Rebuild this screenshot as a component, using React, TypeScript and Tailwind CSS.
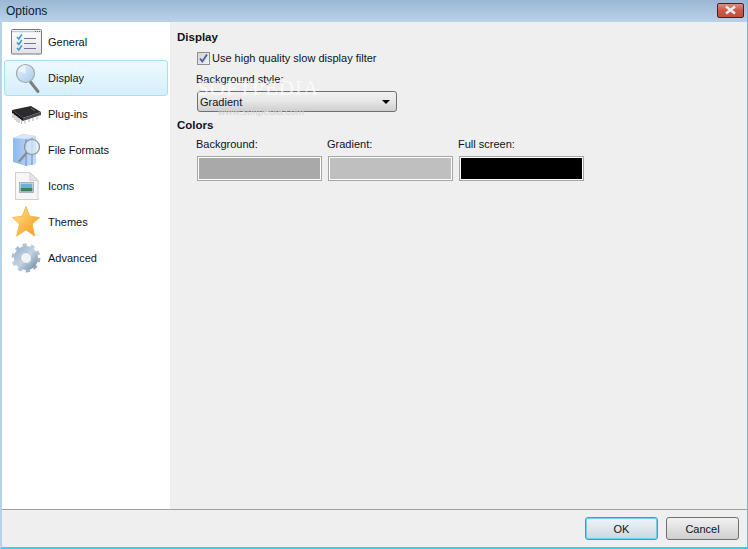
const font = "font-['Liberation_Sans',Arial,sans-serif]";

const GeneralIcon = () => (
  <svg width="32" height="28" viewBox="0 0 32 28">
    <defs>
      <linearGradient id="genBg" x1="0" y1="0" x2="0" y2="1">
        <stop offset="0" stopColor="#ffffff" />
        <stop offset="1" stopColor="#e2e2e6" />
      </linearGradient>
    </defs>
    <rect x="0.500" y="1.500" width="30" height="24.500" rx="1" fill="url(#genBg)" stroke="#77797e" />
    <path d="M1 3.500h29" stroke="#c4c8d2" strokeWidth="1.500" />
    <path d="M24 3.500h1M26 3.500h1M28 3.500h1" stroke="#6d7080" />
    <path d="M6 9l1.800 2 3-4.500M6 14.500l1.800 2 3-4.500M6 20l1.800 2 3-4.500" fill="none" stroke="#2f9bd8" strokeWidth="1.500" />
    <path d="M13 10.500h12M13 15.500h12M13 20.500h12" stroke="#77749a" strokeWidth="1" />
  </svg>
);

const DisplayIcon = () => (
  <svg width="32" height="32" viewBox="0 0 32 32">
    <defs>
      <linearGradient id="lens" x1="0" y1="0" x2="1" y2="1">
        <stop offset="0" stopColor="#e6f1fb" />
        <stop offset="1" stopColor="#a9cbea" />
      </linearGradient>
    </defs>
    <path d="M19.500 20l7.500 9.500" stroke="#7c7e80" strokeWidth="3" strokeLinecap="round" />
    <circle cx="14.500" cy="11.500" r="9" fill="url(#lens)" stroke="#a3a8ac" strokeWidth="1.200" />
    <path d="M14.500 11.500l-7.500-2.500a8 8 0 0 1 7.500-5.500z" fill="#edf5fc" />
  </svg>
);

const PluginIcon = () => (
  <svg width="32" height="24" viewBox="0 0 32 24">
    <path d="M1 8l19-4 10 6-18 6z" fill="#2b2b2d" />
    <path d="M1 8l11 8v3L1 11z" fill="#141416" />
    <path d="M12 16l18-6v3l-18 6z" fill="#4a4a4c" />
    <path d="M2 11v5M4 13v5M6 14.500v5.500M8 16v5M10.500 18v4M14 18.500v3M18 17v3M22 16v3M26 14.500v3" stroke="#b9b9bb" strokeWidth="1.200" />
    <path d="M20 6l4 3" stroke="#707074" />
  </svg>
);

const FormatsIcon = () => (
  <svg width="32" height="34" viewBox="0 0 32 34">
    <defs>
      <linearGradient id="fmtBg" x1="0" y1="0" x2="1" y2="0">
        <stop offset="0" stopColor="#8fb8ee" />
        <stop offset="1" stopColor="#c6dcf6" />
      </linearGradient>
    </defs>
    <path d="M2 5l10-4 13 2v28l-10 2-13-4z" fill="url(#fmtBg)" />
    <path d="M2 5l10-4 13 2-10 3z" fill="#d9e7f9" />
    <path d="M15 6v27M21 5v27" stroke="#5f8fd4" />
    <path d="M15.500 20l-7 8" stroke="#8a8d90" strokeWidth="2.400" strokeLinecap="round" />
    <circle cx="21" cy="14" r="7.500" fill="#dbe8f5" fillOpacity="0.75" stroke="#8d9195" strokeWidth="1.200" />
  </svg>
);

const IconsIcon = () => (
  <svg width="26" height="30" viewBox="0 0 26 30">
    <path d="M1.500 1.500h14.500l8 8v19h-22.500z" fill="#f6f6f6" stroke="#cfcfcf" />
    <path d="M16 1.500v8h8z" fill="#e4e4e4" stroke="#cfcfcf" />
    <rect x="5.500" y="11.500" width="14" height="10" fill="#eef2f4" stroke="#9aa2a8" strokeWidth="0.800" />
    <rect x="6.500" y="12.500" width="12" height="4.500" fill="#6bb0d6" />
    <rect x="6.500" y="17" width="12" height="3.500" fill="#3f7f66" />
  </svg>
);

const ThemesIcon = () => (
  <svg width="32" height="34" viewBox="0 0 32 34">
    <defs>
      <linearGradient id="starBg" x1="0" y1="0" x2="1" y2="1">
        <stop offset="0" stopColor="#ffe88a" />
        <stop offset="1" stopColor="#f4921a" />
      </linearGradient>
    </defs>
    <path d="M24 28l6 3-8 0z" fill="#ececec" />
    <path d="M15 1.500l3.600 9.500 9.900 1.500-7.300 6.500 2.300 12L15 25 5.500 31l3-12L1.500 12.500l9.900-1.500z" fill="url(#starBg)" stroke="#f3b143" strokeWidth="0.800" strokeLinejoin="round" />
  </svg>
);

const AdvancedIcon = () => (
  <svg width="32" height="32" viewBox="0 0 32 32">
    <defs>
      <linearGradient id="gear" x1="0" y1="0" x2="1" y2="1">
        <stop offset="0" stopColor="#9db6cf" />
        <stop offset="0.500" stopColor="#c3d3e2" />
        <stop offset="1" stopColor="#7f98b0" />
      </linearGradient>
    </defs>
    <circle cx="15" cy="16" r="13" fill="none" stroke="url(#gear)" strokeWidth="2.800" strokeDasharray="4.200 4" />
    <circle cx="15" cy="16" r="9" fill="none" stroke="url(#gear)" strokeWidth="6" />
    <circle cx="15" cy="16" r="5.500" fill="#f1f4f7" stroke="#8ea4b8" strokeWidth="0.800" />
  </svg>
);

const items = [
  { label: "General", icon: <GeneralIcon /> },
  { label: "Display", icon: <DisplayIcon />, active: true },
  { label: "Plug-ins", icon: <PluginIcon /> },
  { label: "File Formats", icon: <FormatsIcon /> },
  { label: "Icons", icon: <IconsIcon /> },
  { label: "Themes", icon: <ThemesIcon /> },
  { label: "Advanced", icon: <AdvancedIcon /> },
];

const swatches = [
  { label: "Background:", color: "bg-[#a9a9a9]" },
  { label: "Gradient:", color: "bg-[#bfbfbf]" },
  { label: "Full screen:", color: "bg-black" },
];

export default function App() {
  return (
    <div className={`${font} relative flex h-[549px] w-[748px] flex-col overflow-hidden text-[11px] leading-[14px] text-[#10131c]`}>
      <div className="flex h-[22px] shrink-0 items-center justify-between border-r border-r-[#35d0f2] bg-gradient-to-b from-[#9cb7d3] to-[#b9d2ea] pl-[6px] pr-[3px]">
        <span className="text-[12px] text-[#0d1a2b]">Options</span>
        <div className="flex h-[15px] w-[27px] -translate-y-[1px] items-center justify-center rounded-[2px] border border-[#4a1f2c] bg-gradient-to-b from-[#dc8d7e] via-[#c95a45] to-[#c0523c]">
          <svg width="13" height="10" viewBox="0 0 13 10">
            <path d="M2 1.500l9 7M11 1.500l-9 7" stroke="#e9e9ee" strokeWidth="2.600" />
          </svg>
        </div>
      </div>

      <div className="flex min-h-0 flex-1 border-l-2 border-r border-b-2 border-l-[#b9d2ea] border-r-[#35d0f2] border-b-[#35d0f2] bg-[#efefef]">
        <div className="flex min-h-0 flex-1 flex-col">
          <div className="flex min-h-0 flex-1">
            <nav className="flex w-[168px] shrink-0 flex-col bg-white pl-[2px] pr-[2px] pt-[2px]">
              {items.map((item) => (
                <div
                  key={item.label}
                  className={`flex h-[36px] items-center rounded-[3px] border ${
                    item.active
                      ? "border-[#a9dcf5] bg-gradient-to-b from-[#eef9fe] to-[#d5effc]"
                      : "border-transparent"
                  }`}
                >
                  <div className="flex w-[43px] shrink-0 items-center justify-center">{item.icon}</div>
                  <span className="truncate">{item.label}</span>
                </div>
              ))}
            </nav>

            <main className="flex-1 pl-[7px] pt-[8px]">
              <h2 className="h-[14px] text-[11.5px] font-bold">Display</h2>
              <div className="pl-[20px]">
                <label className="mt-[7px] flex h-[14px] items-center gap-[2px]">
                  <span className="flex h-[13px] w-[13px] items-center justify-center border border-[#8e8f8f] bg-gradient-to-br from-[#d4d4d6] to-[#f0f0f2]">
                    <svg width="11" height="11" viewBox="0 0 11 11">
                      <path d="M2 5.500l2.300 3L9 1.500" fill="none" stroke="#4a5f97" strokeWidth="1.800" />
                    </svg>
                  </span>
                  <span>Use high quality slow display filter</span>
                </label>
                <div className="-ml-[1px] mt-[7px] h-[14px]">Background style:</div>
                <div className="mt-[5px] flex h-[21px] w-[200px] items-center justify-between rounded-[3px] border border-[#707070] bg-gradient-to-b from-[#f2f2f2] via-[#e6e6e6] to-[#cfcfcf] pl-[2px] pr-[6px]">
                  <span>Gradient</span>
                  <span className="h-0 w-0 border-x-[4px] border-t-[4px] border-x-transparent border-t-black" />
                </div>
              </div>
              <h2 className="mt-[6px] h-[14px] text-[11.5px] font-bold">Colors</h2>
              <div className="mt-[5px] flex gap-[6px] pl-[20px]">
                {swatches.map((swatch) => (
                  <div key={swatch.label} className="w-[125px]">
                    <div className="-ml-[1px] h-[14px]">{swatch.label}</div>
                    <div className={`mt-[5px] h-[25px] border-2 border-[#a5a5a5] outline outline-1 -outline-offset-2 outline-white ${swatch.color}`} />
                  </div>
                ))}
              </div>
            </main>
          </div>

          <footer className="flex h-[38px] shrink-0 items-start justify-end gap-[8px] border-t border-[#a0a0a0] bg-[#efefef] pr-[8px] pt-[7px]">
            <button className="h-[23px] w-[73px] rounded-[3px] border border-[#3a9fc4] bg-gradient-to-b from-[#f0f5f8] to-[#c9d8e2] shadow-[inset_0_0_0_1px_#6fd0ee]">OK</button>
            <button className="h-[23px] w-[73px] rounded-[3px] border border-[#707070] bg-gradient-to-b from-[#f2f2f2] to-[#cfcfcf]">Cancel</button>
          </footer>
        </div>
      </div>

      <div className="pointer-events-none absolute left-[197px] top-[77px] font-['Liberation_Serif',serif] text-[21px] leading-[22px] tracking-[1px] text-white opacity-70">SOFTPEDIA</div>
      <div className="pointer-events-none absolute left-[218px] top-[106px] text-[10px] leading-[12px] text-[#d4d4d4]">www.softpedia.com</div>
    </div>
  );
}
